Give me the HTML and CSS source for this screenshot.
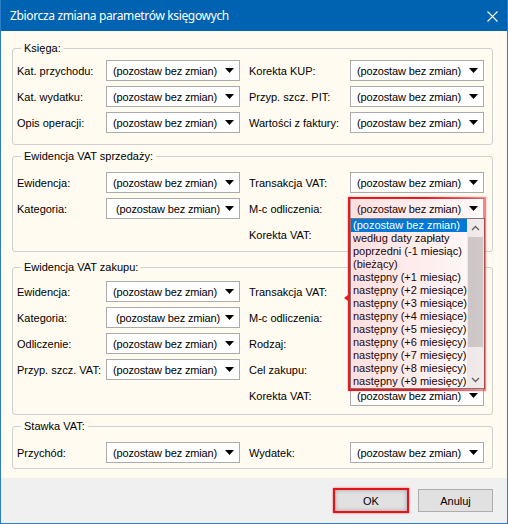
FILE: index.html
```html
<!DOCTYPE html>
<html lang="pl">
<head>
<meta charset="utf-8">
<title>Zbiorcza zmiana parametrów księgowych</title>
<link rel="stylesheet" href="styles.css">
</head>
<body>
<div class="window">
  <div class="titlebar">
    <span class="title">Zbiorcza zmiana parametrów księgowych</span>
    <svg class="close" width="11" height="11" viewBox="0 0 11 11"><path d="M0.5 0.5L10.5 10.5M10.5 0.5L0.5 10.5" stroke="#fff" stroke-width="1.1" fill="none"/></svg>
  </div>
  <div class="client">
    <fieldset class="group g1">
      <legend>Księga:</legend>
      <div class="rows">
        <span class="lbl">Kat. przychodu:</span>
        <div class="combo"><span>(pozostaw bez zmian)</span><svg class="arrow" viewBox="0 0 9 5"><polygon points="0,0 9,0 4.5,5"/></svg></div>
        <span class="lbl r">Korekta KUP:</span>
        <div class="combo"><span>(pozostaw bez zmian)</span><svg class="arrow" viewBox="0 0 9 5"><polygon points="0,0 9,0 4.5,5"/></svg></div>

        <span class="lbl">Kat. wydatku:</span>
        <div class="combo"><span>(pozostaw bez zmian)</span><svg class="arrow" viewBox="0 0 9 5"><polygon points="0,0 9,0 4.5,5"/></svg></div>
        <span class="lbl r">Przyp. szcz. PIT:</span>
        <div class="combo"><span>(pozostaw bez zmian)</span><svg class="arrow" viewBox="0 0 9 5"><polygon points="0,0 9,0 4.5,5"/></svg></div>

        <span class="lbl">Opis operacji:</span>
        <div class="combo"><span>(pozostaw bez zmian)</span><svg class="arrow" viewBox="0 0 9 5"><polygon points="0,0 9,0 4.5,5"/></svg></div>
        <span class="lbl r">Wartości z faktury:</span>
        <div class="combo"><span>(pozostaw bez zmian)</span><svg class="arrow" viewBox="0 0 9 5"><polygon points="0,0 9,0 4.5,5"/></svg></div>
      </div>
    </fieldset>

    <fieldset class="group g2">
      <legend>Ewidencja VAT sprzedaży:</legend>
      <div class="rows">
        <span class="lbl">Ewidencja:</span>
        <div class="combo"><span>(pozostaw bez zmian)</span><svg class="arrow" viewBox="0 0 9 5"><polygon points="0,0 9,0 4.5,5"/></svg></div>
        <span class="lbl r">Transakcja VAT:</span>
        <div class="combo"><span>(pozostaw bez zmian)</span><svg class="arrow" viewBox="0 0 9 5"><polygon points="0,0 9,0 4.5,5"/></svg></div>

        <span class="lbl">Kategoria:</span>
        <div class="combo shift"><span>(pozostaw bez zmian)</span><svg class="arrow" viewBox="0 0 9 5"><polygon points="0,0 9,0 4.5,5"/></svg></div>
        <span class="lbl r">M-c odliczenia:</span>
        <div class="combo open"><span>(pozostaw bez zmian)</span><svg class="arrow" viewBox="0 0 9 5"><polygon points="0,0 9,0 4.5,5"/></svg>
          <div class="list">
            <div class="items">
              <div class="item sel">(pozostaw bez zmian)</div>
              <div class="item">według daty zapłaty</div>
              <div class="item">poprzedni (-1 miesiąc)</div>
              <div class="item">(bieżący)</div>
              <div class="item">następny (+1 miesiąc)</div>
              <div class="item">następny (+2 miesiące)</div>
              <div class="item">następny (+3 miesiące)</div>
              <div class="item">następny (+4 miesiące)</div>
              <div class="item">następny (+5 miesięcy)</div>
              <div class="item">następny (+6 miesięcy)</div>
              <div class="item">następny (+7 miesięcy)</div>
              <div class="item">następny (+8 miesięcy)</div>
              <div class="item">następny (+9 miesięcy)</div>
            </div>
            <div class="scroll">
              <div class="sb-btn"><svg width="9" height="6" viewBox="0 0 9 6"><path d="M1 5L4.5 1.5L8 5" stroke="#606060" stroke-width="1.3" fill="none"/></svg></div>
              <div class="thumb"></div>
              <div class="sb-space"></div>
              <div class="sb-btn"><svg width="9" height="6" viewBox="0 0 9 6"><path d="M1 1L4.5 4.5L8 1" stroke="#606060" stroke-width="1.3" fill="none"/></svg></div>
            </div>
          </div>
          <div class="annot"></div>
        </div>

        <span></span>
        <span></span>
        <span class="lbl r">Korekta VAT:</span>
        <div class="combo covered"><span>(pozostaw bez zmian)</span><svg class="arrow" viewBox="0 0 9 5"><polygon points="0,0 9,0 4.5,5"/></svg></div>
      </div>
    </fieldset>

    <fieldset class="group g3">
      <legend>Ewidencja VAT zakupu:</legend>
      <div class="rows">
        <span class="lbl">Ewidencja:</span>
        <div class="combo"><span>(pozostaw bez zmian)</span><svg class="arrow" viewBox="0 0 9 5"><polygon points="0,0 9,0 4.5,5"/></svg></div>
        <span class="lbl r">Transakcja VAT:</span>
        <div class="combo covered"><span>(pozostaw bez zmian)</span><svg class="arrow" viewBox="0 0 9 5"><polygon points="0,0 9,0 4.5,5"/></svg></div>

        <span class="lbl">Kategoria:</span>
        <div class="combo shift"><span>(pozostaw bez zmian)</span><svg class="arrow" viewBox="0 0 9 5"><polygon points="0,0 9,0 4.5,5"/></svg></div>
        <span class="lbl r">M-c odliczenia:</span>
        <div class="combo covered"><span>(pozostaw bez zmian)</span><svg class="arrow" viewBox="0 0 9 5"><polygon points="0,0 9,0 4.5,5"/></svg></div>

        <span class="lbl">Odliczenie:</span>
        <div class="combo"><span>(pozostaw bez zmian)</span><svg class="arrow" viewBox="0 0 9 5"><polygon points="0,0 9,0 4.5,5"/></svg></div>
        <span class="lbl r">Rodzaj:</span>
        <div class="combo covered"><span>(pozostaw bez zmian)</span><svg class="arrow" viewBox="0 0 9 5"><polygon points="0,0 9,0 4.5,5"/></svg></div>

        <span class="lbl">Przyp. szcz. VAT:</span>
        <div class="combo"><span>(pozostaw bez zmian)</span><svg class="arrow" viewBox="0 0 9 5"><polygon points="0,0 9,0 4.5,5"/></svg></div>
        <span class="lbl r">Cel zakupu:</span>
        <div class="combo covered"><span>(pozostaw bez zmian)</span><svg class="arrow" viewBox="0 0 9 5"><polygon points="0,0 9,0 4.5,5"/></svg></div>

        <span></span>
        <span></span>
        <span class="lbl r">Korekta VAT:</span>
        <div class="combo"><span>(pozostaw bez zmian)</span><svg class="arrow" viewBox="0 0 9 5"><polygon points="0,0 9,0 4.5,5"/></svg></div>
      </div>
    </fieldset>

    <fieldset class="group g4">
      <legend>Stawka VAT:</legend>
      <div class="rows">
        <span class="lbl">Przychód:</span>
        <div class="combo"><span>(pozostaw bez zmian)</span><svg class="arrow" viewBox="0 0 9 5"><polygon points="0,0 9,0 4.5,5"/></svg></div>
        <span class="lbl r">Wydatek:</span>
        <div class="combo"><span>(pozostaw bez zmian)</span><svg class="arrow" viewBox="0 0 9 5"><polygon points="0,0 9,0 4.5,5"/></svg></div>
      </div>
    </fieldset>
  </div>
  <div class="footer">
    <button class="btn ok">OK</button>
    <button class="btn">Anuluj</button>
  </div>
</div>
</body>
</html>
```
FILE: styles.css
```css
* { box-sizing: border-box; }
html, body { margin: 0; padding: 0; }
body {
  width: 508px;
  height: 524px;
  overflow: hidden;
  font-family: "Liberation Sans", Arial, sans-serif;
  font-size: 11px;
  color: #000;
  background: #f0f0f0;
}
.window {
  width: 508px;
  height: 524px;
  display: flex;
  flex-direction: column;
  border: 1px solid #2c7cc8;
  border-top: none;
}
.titlebar {
  height: 31px;
  flex: none;
  background: #0063b1;
  display: flex;
  align-items: center;
  padding-left: 9px;
  color: #fff;
}
.title {
  font-family: "Noto Sans", "Open Sans", sans-serif;
  font-size: 12px;
  line-height: 16px;
  letter-spacing: -0.35px;
}
.close {
  margin-left: auto;
  margin-right: 9px;
  margin-top: 1px;
}
.client {
  height: 447px;
  flex: none;
  background: #fffbf0;
  padding: 0 14px 0 11px;
  display: flex;
  flex-direction: column;
}
.group {
  margin: 0;
  min-width: 0;
  border: 1px solid #cfcfcf;
  border-radius: 3px;
  padding: 5px 8px 11px 4px;
}
.group legend {
  padding: 0 3px;
  margin-left: 4px;
  line-height: 13px;
  font-size: 11px;
}
.g1 { margin-top: 11px; padding-top: 5px; padding-bottom: 11px; }
.g2 { margin-top: 5px; padding-top: 9px; padding-bottom: 6px; }
.g3 { margin-top: 9px; padding-top: 7px; padding-bottom: 8px; }
.g4 { margin-top: 5px; padding-top: 9px; padding-bottom: 5px; }

.rows {
  display: grid;
  grid-template-columns: 89px 134px 110px 134px;
  grid-auto-rows: 21px;
  row-gap: 5px;
  align-items: center;
}
.lbl { white-space: nowrap; }
.lbl.r { padding-left: 9px; }

.combo {
  height: 21px;
  border: 1px solid #ababab;
  background: #fff;
  display: flex;
  align-items: center;
  padding: 0 5px 0 6px;
  white-space: nowrap;
  letter-spacing: -0.15px;
}
.combo.shift { padding-left: 9px; }
.combo.covered span { visibility: hidden; }
.combo .arrow {
  margin-left: auto;
  width: 9px;
  height: 5px;
  flex: none;
  fill: #000;
}
.combo.open {
  position: relative;
  z-index: 10;
}
.list {
  position: absolute;
  left: -1px;
  top: 19px;
  width: 135px;
  height: 171px;
  border: 1px solid #7a7a7a;
  background: #fff;
  display: flex;
  letter-spacing: 0;
}
.items { flex: 1; min-width: 0; }
.item {
  height: 13px;
  line-height: 13px;
  padding-left: 2px;
  white-space: nowrap;
  overflow: hidden;
}
.item.sel {
  background: #0078d7;
  color: #fff;
  position: relative;
  z-index: 3;
}
.scroll {
  width: 17px;
  flex: none;
  background: #f0f0f0;
  display: flex;
  flex-direction: column;
}
.sb-btn {
  height: 17px;
  flex: none;
  display: flex;
  align-items: center;
  justify-content: center;
}
.thumb {
  height: 110px;
  flex: none;
  margin: 1px 1px 0 1px;
  background: #cdcdcd;
}
.sb-space { flex: 1; }
.annot {
  position: absolute;
  left: -3px;
  top: -2px;
  width: 138px;
  height: 194px;
  z-index: 2;
  pointer-events: none;
  border: 2px solid #e41b23;
  border-image: linear-gradient(to right, #e41b23 0%, #e41b23 55%, rgba(228, 27, 35, 0.45) 100%) 1;
  background: linear-gradient(to right, rgba(240, 60, 60, 0.16), rgba(240, 60, 60, 0.03));
  box-shadow: 0 0 2px rgba(228, 27, 35, 0.35);
}
.annot::before {
  content: "";
  position: absolute;
  left: -6px;
  top: 96px;
  border-top: 3px solid transparent;
  border-bottom: 3px solid transparent;
  border-right: 4px solid #e41b23;
}

.footer {
  flex: 1;
  background: #f0f0f0;
  display: flex;
  justify-content: flex-end;
  align-items: center;
  gap: 9px;
  padding-right: 14px;
}
.btn {
  width: 75px;
  height: 23px;
  border: 1px solid #adadad;
  background: #e1e1e1;
  font-family: "Liberation Sans", Arial, sans-serif;
  font-size: 11px;
  color: #000;
  padding: 0;
  margin: 0;
}
.btn.ok {
  width: 76px;
  height: 25px;
  border: 2px solid #e3121b;
  box-shadow: 0 0 2px rgba(227, 18, 27, 0.6), inset 0 0 4px rgba(0, 0, 0, 0.3);
}
```
